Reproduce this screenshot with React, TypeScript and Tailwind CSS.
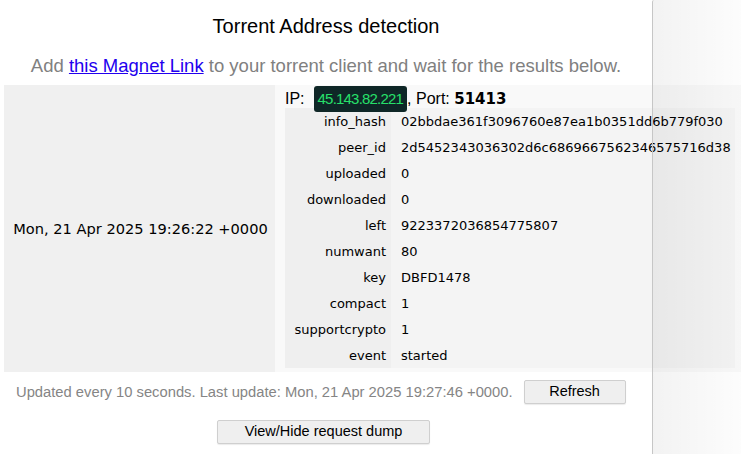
import React from "react";

const rows: [string, string][] = [
  ["info_hash", "02bbdae361f3096760e87ea1b0351dd6b779f030"],
  ["peer_id", "2d5452343036302d6c6869667562346575716d38"],
  ["uploaded", "0"],
  ["downloaded", "0"],
  ["left", "9223372036854775807"],
  ["numwant", "80"],
  ["key", "DBFD1478"],
  ["compact", "1"],
  ["supportcrypto", "1"],
  ["event", "started"],
];

const sans = "font-['Liberation_Sans',Arial,sans-serif]";

export default function App() {
  return (
    <div className="relative h-[454px] w-[741px] overflow-hidden bg-white text-black">
      <div className="min-h-full w-[652px] rounded-tr-lg bg-white pt-[13px]">
        <h1 className={`${sans} text-center text-[20px] leading-[26px]`}>
          Torrent Address detection
        </h1>
        <p className={`${sans} mt-[16px] text-center text-[18.5px] leading-[22px] text-[#808080]`}>
          Add{" "}
          <a href="#" className="text-[#2200ee] underline">
            this Magnet Link
          </a>{" "}
          to your torrent client and wait for the results below.
        </p>

        {/* results */}
        <div className="ml-[4px] mt-[8px] flex w-[737px] font-['DejaVu_Sans',Verdana,sans-serif] text-[13px]">
          <div className="flex w-[271px] shrink-0 items-center justify-center bg-[#f0f0f0] pl-[2px] pt-[1px] text-[14.6px]">
            Mon, 21 Apr 2025 19:26:22 +0000
          </div>
          <div className="flex-1 bg-[#f9f9f9] px-[10px] pb-[4px] pt-[1px]">
            <div className={`${sans} flex h-[26px] items-center text-[16px]`}>
              <span className="mr-[9px]">IP:</span>
              <span className="relative z-10 flex h-[26px] items-center rounded-[3px] bg-[#0f2727] px-[4px] text-[15px] tracking-[-0.8px] text-[#27e06a]">
                45.143.82.221
              </span>
              <span>, Port:&nbsp;</span>
              <span className="font-['DejaVu_Sans',Verdana,sans-serif] text-[15px] font-bold">51413</span>
            </div>
            <table className="-mt-[4px] w-[450px] border-collapse">
              <tbody>
                {rows.map(([k, v]) => (
                  <tr key={k} className="h-[26px]">
                    <td className="w-[106px] bg-[#efefef] pr-[5px] pt-[2px] text-right">{k}</td>
                    <td className="bg-[#f4f4f4] pl-[10px] pt-[2px]">{v}</td>
                  </tr>
                ))}
              </tbody>
            </table>
          </div>
        </div>

        <div className={`${sans} ml-[16px] mt-[8px] flex items-center gap-[11px] text-[14.75px]`}>
          <span className="text-[#858585]">
            Updated every 10 seconds. Last update: Mon, 21 Apr 2025 19:27:46 +0000.
          </span>
          <button className="h-[24px] w-[102px] rounded-[2px] border border-[#cfcfcf] bg-[#efefef] text-[14.5px] text-black shadow-[0_1px_1px_rgba(0,0,0,0.08)]">
            Refresh
          </button>
        </div>

        <div className={`${sans} mt-[16px] flex justify-center pr-[5px] text-[14.5px]`}>
          <button className="h-[24px] w-[213px] rounded-[2px] border border-[#cfcfcf] bg-[#efefef] text-black shadow-[0_1px_1px_rgba(0,0,0,0.08)]">
            View/Hide request dump
          </button>
        </div>
      </div>

      {/* side shadow over the overflowing content */}
      <div className="pointer-events-none absolute bottom-0 left-[652px] right-0 top-0 rounded-tl-[2px] border-l border-[#c6c6c6] bg-gradient-to-r from-black/[0.05] to-black/[0.01]" />
    </div>
  );
}
